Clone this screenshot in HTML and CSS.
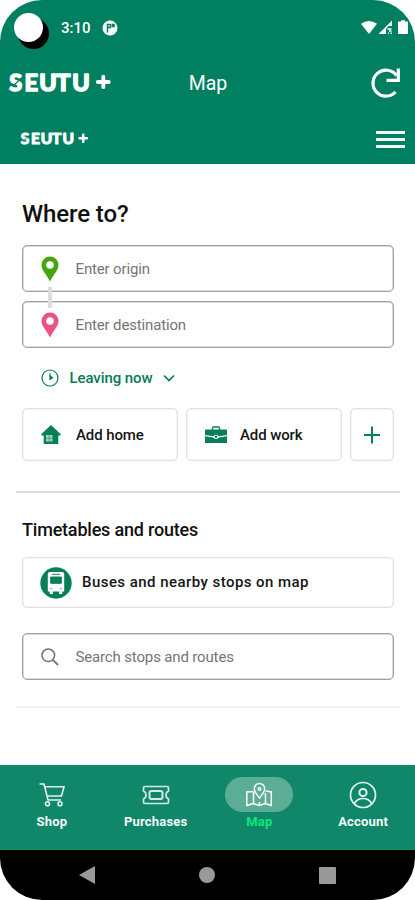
FILE: index.html
```html
<!DOCTYPE html>
<html lang="en">
<head>
<meta charset="utf-8">
<title>Seutu+ Map</title>
<link rel="stylesheet" href="styles.css">
</head>
<body>
<div class="phone">
  <header class="top">
    <div class="status">
      <span class="camera"></span>
      <span class="time">3:10</span>
      <svg class="app-dot" width="16" height="16" viewBox="0 0 16 16"><circle cx="8" cy="8" r="7.500" fill="#fff"/><path d="M5.500 12.500V4.500h3v3h-3M10.500 4.500h1.500v2h-1.500z" fill="none" stroke="#008060" stroke-width="1.500"/></svg>
      <svg class="signals" width="48" height="16" viewBox="0 0 48 16"><path d="M0 3.800Q8 -1.800 16 3.800L8 14z" fill="#fff"/><path d="M17.500 14L31 .5V6h-3.500L25 9v5z" fill="#fff"/><path d="M26.500 9h4M27 13.300h1M29.500 13.300h1.500M28 11h2.500" stroke="#fff" stroke-width="1.500"/><path d="M40 1.500V.3h4v1.200h2q1 0 1 1V13q0 1-1 1h-8q-1 0-1-1V2.500q0-1 1-1z" fill="#fff"/></svg>
    </div>
    <div class="appbar">
      <svg class="logo" width="104" height="36" viewBox="0 0 104 36"><text class="logo-text" x="1.200 16.500 31.200 48.300 64.200" y="26">SEUTU</text><path d="M4.500 21.500L13.500 13" stroke="#008060" stroke-width="1.300"/><path d="M95.300 11.700v10.500M89.800 17h11" stroke="#fff" stroke-width="3.800" stroke-linecap="round"/></svg>
      <h1>Map</h1>
      <svg class="reload" width="32" height="32" viewBox="0 0 32 32" fill="none" stroke="#fff" stroke-width="3.200"><path d="M25.500 25A13 13 0 1 1 26.500 8.500"/><path d="M28.300 1.500v11.800H16.500"/></svg>
    </div>
    <div class="subbar">
      <svg class="logo-small" width="69" height="24" viewBox="0 0 104 36"><text class="logo-text" x="1.200 16.500 31.200 48.300 64.200" y="26">SEUTU</text><path d="M4.500 21.500L13.500 13" stroke="#008060" stroke-width="1.300"/><path d="M95.300 11.700v10.500M89.800 17h11" stroke="#fff" stroke-width="3.800" stroke-linecap="round"/></svg>
      <span class="burger"><i></i><i></i><i></i></span>
    </div>
  </header>

  <main>
    <h2>Where to?</h2>
    <div class="trip">
      <div class="field"><svg class="icon" width="18" height="26" viewBox="0 0 18 26"><path d="M9 .5a8.500 8.500 0 0 0-8.500 8.500C.5 14 4.500 17 9 25.500C13.500 17 17.500 14 17.500 9A8.500 8.500 0 0 0 9 .5z" fill="#49a30c"/><circle cx="9" cy="9" r="3.800" fill="#fff"/></svg><span class="t-origin">Enter origin</span></div>
      <div class="field"><svg class="icon" width="18" height="26" viewBox="0 0 18 26"><path d="M9 .5a8.500 8.500 0 0 0-8.500 8.500C.5 14 4.500 17 9 25.500C13.500 17 17.500 14 17.500 9A8.500 8.500 0 0 0 9 .5z" fill="#ec5288"/><circle cx="9" cy="9" r="3.800" fill="#fff"/></svg><span class="t-dest">Enter destination</span></div>
      <span class="link"></span>
    </div>
    <div class="leaving">
      <svg width="18" height="18" viewBox="0 0 18 18"><circle cx="9" cy="9" r="8" fill="none" stroke="#0a7a58" stroke-width="1.200"/><path d="M9 4.500v6.500" stroke="#0a7a58" stroke-width="1.300"/><path d="M9 6l3.500 2.700L9 11z" fill="#0a7a58"/></svg>
      <span class="t-leaving">Leaving now</span>
      <svg class="chev" width="12" height="8" viewBox="0 0 12 8"><path d="M1 1.500l5 5 5-5" fill="none" stroke="#0a7a58" stroke-width="1.700"/></svg>
    </div>
    <div class="places">
      <div class="card"><svg class="icon" width="20" height="20" viewBox="0 0 20 20"><path d="M10 0l10 9.500-1 1h-1.700V19H2.700v-8.500H1l-1-1z" fill="#087e5a"/><path d="M5 10h6.500v6.500H5z" fill="#a5d3c4"/><path d="M8.250 10v6.500M5 13.250h6.500" stroke="#4d9f85" stroke-width="1"/></svg><span class="t-home">Add home</span></div>
      <div class="card"><svg class="icon-case" width="22" height="18" viewBox="0 0 22 18"><path d="M7.500 4V2q0-1 1-1h5q1 0 1 1v2" fill="none" stroke="#087e5a" stroke-width="1.300"/><path d="M1 3.500h20q1 0 1 1V9l-8 1.300L11 8.500l-3 1.800L0 9V4.500q0-1 1-1zM0 10.200L8.300 11.500q2.700 3 5.400 0L22 10.200V17H0z" fill="#087e5a"/><circle cx="11" cy="10.800" r="1.300" fill="#087e5a"/></svg><span class="t-work">Add work</span></div>
      <div class="card plus"><svg width="16" height="18" viewBox="0 0 16 18"><path d="M8 .5v17M0 9h16" stroke="#087e5a" stroke-width="2"/></svg></div>
    </div>
    <hr class="rule">
    <h3>Timetables and routes</h3>
    <div class="card stops"><svg width="32" height="32" viewBox="0 0 32 32"><circle cx="16" cy="16" r="15.700" fill="#087e5a"/><path d="M10 5h12q2.200 0 2.200 2.200V24.500h-2V27h-3v-2.500h-6.400V27h-3v-2.500h-2V7.200Q7.800 5 10 5z" fill="#fff"/><path d="M10.700 10h10.600v6.300H10.700zM12 7.300h8" fill="#087e5a" stroke="#087e5a" stroke-width="1"/><path d="M10 21.500h2M20 21.500h2" stroke="#75b9a4" stroke-width="1.200"/></svg><span class="t-buses">Buses and nearby stops on map</span></div>
    <div class="field search"><svg class="icon" width="18" height="18" viewBox="0 0 18 18" fill="none" stroke="#747474"><circle cx="7.300" cy="7.300" r="6.300" stroke-width="1.500"/><path d="M11.800 11.800l5.200 5.200" stroke-width="1.900"/></svg><span class="t-search">Search stops and routes</span></div>
    <hr class="rule soft">
  </main>

  <nav class="tabs">
    <div class="tab"><span class="pill"><svg width="28" height="26" viewBox="0 0 28 26" fill="none" stroke="#e3f2ec" stroke-width="1.600"><path d="M1.500 2H6l4 16h13M7 4.700h19L23.500 14H9"/><circle cx="9.500" cy="21.800" r="2"/><circle cx="22" cy="21.800" r="2"/></svg></span><b class="t-shop">Shop</b></div>
    <div class="tab"><span class="pill"><svg width="28" height="20" viewBox="0 0 28 20" fill="none" stroke="#d3ebe2" stroke-width="1.700"><path d="M3 1.500h22q1.500 0 1.500 1.500v3q-2.500 1-2.500 4t2.500 4v3q0 1.500-1.500 1.500H3q-1.500 0-1.500-1.500v-3Q4 13 4 10T1.500 6V3Q1.500 1.500 3 1.500z"/><rect x="7.500" y="6" width="13" height="8" rx="2" stroke-width="2"/></svg></span><b class="t-purch">Purchases</b></div>
    <div class="tab active"><span class="pill"><svg width="28" height="26" viewBox="0 0 28 26" fill="none" stroke="#fff" stroke-width="1.500"><path d="M8.500 9.500L1.800 10v13.500l6.500-2 6 2 6-2 6 2V10l-5.500-1"/><path d="M8.500 10v11.500M14.500 20v3.500M20.500 11v10.500"/><path d="M14.500 16C11.500 12 9.300 10 9.300 6.700a5.200 5.200 0 0 1 10.400 0c0 3.300-2.200 5.300-5.200 9.300z"/><circle cx="14.500" cy="7" r="1.300"/></svg></span><b class="t-map">Map</b></div>
    <div class="tab"><span class="pill"><svg width="28" height="28" viewBox="0 0 28 28" fill="none" stroke="#e3f2ec" stroke-width="1.700"><circle cx="14" cy="14" r="12.500"/><circle cx="14" cy="11.500" r="3.600" stroke-width="2"/><path d="M5.500 22.500q2.500-5 8.500-5t8.500 5"/></svg></span><b class="t-acc">Account</b></div>
  </nav>
  <footer class="system">
    <svg width="16" height="18" viewBox="0 0 16 18"><path d="M0 9L16 0v18z" fill="#999"/></svg>
    <svg width="16" height="16" viewBox="0 0 16 16"><circle cx="8" cy="8" r="8" fill="#999"/></svg>
    <svg width="17" height="17" viewBox="0 0 17 17"><rect width="17" height="17" rx="1" fill="#999"/></svg>
  </footer>
</div>
</body>
</html>
```
FILE: styles.css
```css
* { box-sizing: border-box; }
body { margin: 0; background: #fff; font-family: Roboto, "Liberation Sans", sans-serif; color: #111; }
svg { display: block; flex: none; }
h1, h2, h3 { margin: 0; white-space: nowrap; }
span, b { white-space: nowrap; }
.phone { width: 415px; height: 900px; border-radius: 42px; overflow: hidden; display: flex; flex-direction: column; background: #fff; }

.top { height: 164px; background: #008060; color: #fff; flex: none; }
.status { height: 55px; display: flex; align-items: center; padding: 0 6px 0 14px; }
.camera { width: 29px; height: 29px; border-radius: 50%; background: #fff; box-shadow: 5px 6px 0 1px #000; }
.time { margin-left: 18px; font-size: 15px; font-weight: 500; line-height: 20px; }
.app-dot { margin-left: 11px; }
.signals { margin-left: auto; }
.appbar { height: 59px; display: grid; grid-template-columns: 1fr auto 1fr; align-items: center; padding: 0 13px 4px 8px; }
.appbar h1 { font-size: 19.5px; font-weight: 400; line-height: 24px; margin-top: 3px; margin-left: 6px; }
.reload { justify-self: end; }
.logo-text { font-family: Lato, sans-serif; font-weight: 700; font-size: 23.5px; fill: #fff; stroke: #fff; stroke-width: 1.7px; stroke-linejoin: round; }
.logo { margin-top: 1px; }
.subbar { height: 50px; display: flex; align-items: center; justify-content: space-between; padding: 0 10px 0 20px; }
.burger { width: 29px; display: grid; gap: 4px; }
.burger i { height: 3px; background: #f4faf8; }

main { flex: none; height: 602px; padding: 34px 21px 0 22px; }
h2 { font-size: 24px; line-height: 32px; font-weight: 500; letter-spacing: -.1px; }
.trip { position: relative; display: grid; gap: 9px; margin-top: 15px; }
.field { height: 47px; border: 1px solid #a2a2a2; box-shadow: inset 0 0 0 .5px #b5b5b5; border-radius: 5px; display: flex; align-items: center; padding-left: 18px; font-size: 15px; color: #757575; font-weight: 400; letter-spacing: -.15px; }
.icon { margin-right: 16.5px; }
.link { position: absolute; left: 26px; top: 42px; width: 4px; height: 21px; background: #ddd; }
.leaving { display: flex; align-items: center; height: 20px; margin-top: 20px; padding-left: 19px; font-size: 15px; font-weight: 500; color: #0a7a58; letter-spacing: -.08px; }
.t-leaving { margin-left: 10.5px; }
.chev { margin-left: 10.5px; }
.places { display: grid; grid-template-columns: 156px 156px 44px; gap: 8px; margin-top: 20px; }
.card { height: 53px; border: 1px solid #e0e0e0; box-shadow: inset 0 0 0 .5px #eee; border-radius: 5px; display: flex; align-items: center; padding-left: 18px; font-size: 15px; font-weight: 500; color: #161616; letter-spacing: -.1px; }
.card .icon { margin: 0 15px 0 0; }
.icon-case { margin-right: 13px; }
.plus { padding: 0; justify-content: center; }
.rule { border: 0; height: 2px; margin: 30px -6px 0; background: #dedede; }
h3 { font-size: 18px; line-height: 24px; font-weight: 500; margin-top: 25px; letter-spacing: -.2px; }
.stops { height: 51px; margin-top: 15px; padding-left: 17px; letter-spacing: .45px; }
.t-buses { margin: -2px 0 0 10px; }
.search { margin-top: 25px; }
.soft { margin-top: 26px; background: #f0f0f0; }

.tabs { height: 85px; margin-top: -1px; background: #0f8768; display: grid; grid-template-columns: repeat(4, 1fr); padding-top: 12px; color: #f3faf7; flex: none; }
.tab { display: flex; flex-direction: column; align-items: center; font-size: 13px; line-height: 16px; letter-spacing: .2px; }
.pill { width: 68px; height: 35px; border-radius: 18px; display: flex; align-items: center; justify-content: center; margin-bottom: 2px; }
.active .pill { background: #5cad95; }
.active b { color: #10e581; }
.system { height: 50px; background: #000; display: flex; align-items: center; justify-content: space-between; padding: 0 79px; }
```
